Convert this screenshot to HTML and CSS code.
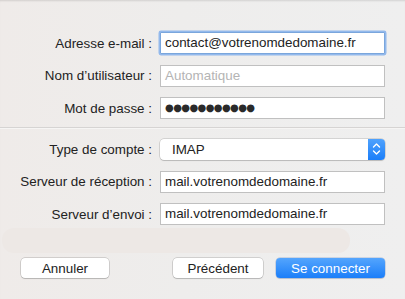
FILE: index.html
```html
<!DOCTYPE html>
<html lang="fr">

<head>
    <meta charset="UTF-8">
    <meta name="viewport" content="width=device-width, initial-scale=1.0">
    <title>Compte Mail</title>
    <link rel="stylesheet" href="styles.css">
</head>

<body>
    <div class="sheet">
        <div class="rows">
            <div class="row">
                <label class="label">Adresse e-mail :</label>
                <div class="field focused">contact@votrenomdedomaine.fr</div>
            </div>
            <div class="row">
                <label class="label">Nom d’utilisateur :</label>
                <div class="field placeholder">Automatique</div>
            </div>
            <div class="row">
                <label class="label">Mot de passe :</label>
                <div class="field dots">●●●●●●●●●●●</div>
            </div>
        </div>

        <div class="separator"></div>

        <div class="rows">
            <div class="row">
                <label class="label">Type de compte :</label>
                <div class="popup">
                    <span class="popupValue">IMAP</span>
                    <span class="stepper">
                        <svg width="9" height="14" viewBox="0 0 9 14">
                            <path d="M1.5 5 L4.5 2 L7.5 5 M1.5 9 L4.5 12 L7.5 9" fill="none" stroke="#fff" stroke-width="1.4" stroke-linecap="round" stroke-linejoin="round"/>
                        </svg>
                    </span>
                </div>
            </div>
            <div class="row">
                <label class="label">Serveur de réception :</label>
                <div class="field">mail.votrenomdedomaine.fr</div>
            </div>
            <div class="row">
                <label class="label">Serveur d’envoi :</label>
                <div class="field">mail.votrenomdedomaine.fr</div>
            </div>
        </div>

        <div class="haze"></div>

        <div class="buttons">
            <button class="btn cancel">Annuler</button>
            <div class="spacer"></div>
            <button class="btn">Précédent</button>
            <button class="btn primary">Se connecter</button>
        </div>
    </div>
</body>

</html>
```

FILE: styles.css
```css
html, body {
    height: 100%;
}

body {
    margin: 0;
    padding: 0;
    background: linear-gradient(90deg, #efebe9 0%, #eeedec 45%, #efefef 100%);
    color: #222;
    font-family: "Liberation Sans", Arial, sans-serif;
    font-size: 13.4px;
    overflow: hidden;
}

.sheet {
    height: 100%;
    box-sizing: border-box;
    padding-top: 32px;
    box-shadow: inset 0 2px 2px -1px rgba(0, 0, 0, 0.12);
}

.rows {
    display: flex;
    flex-direction: column;
    gap: 10.5px;
}

.row {
    display: flex;
    align-items: center;
    height: 22px;
}

.label {
    width: 156px;
    text-align: right;
    padding-right: 4px;
    box-sizing: border-box;
    white-space: nowrap;
}

.field {
    width: 225px;
    height: 22px;
    margin-left: 4px;
    box-sizing: border-box;
    border: 1px solid #c0c0c0;
    background-color: #fff;
    padding: 0 4px;
    line-height: 20px;
    white-space: nowrap;
}

.focused {
    border-color: #7aa6dc;
    box-shadow: 0 0 0 1.5px #93b9ec;
    border-radius: 1px;
}

.placeholder {
    color: #b4b4b4;
}

.dots {
    font-family: "DejaVu Sans", sans-serif;
    font-size: 10px;
    color: #2a2a2a;
    letter-spacing: -0.6px;
}

.separator {
    height: 1px;
    background-color: #d6d4d3;
    border-bottom: 1px solid #f6f5f4;
    margin: 8px 0 9px;
}

.popup {
    width: 225px;
    height: 21px;
    margin-left: 4px;
    box-sizing: border-box;
    display: flex;
    align-items: center;
    background-color: #fff;
    border-radius: 4px;
    box-shadow: 0 0 0 0.5px rgba(0, 0, 0, 0.22), 0 1px 1px rgba(0, 0, 0, 0.12);
    overflow: hidden;
}

.popupValue {
    flex: 1;
    padding-left: 12px;
}

.stepper {
    width: 17px;
    height: 100%;
    display: flex;
    align-items: center;
    justify-content: center;
    background: linear-gradient(#4fa2fd, #1b7ef9);
}

.haze {
    height: 25px;
    width: 348px;
    margin: 3px 0 0 2px;
    background-color: #ede8e5;
    border-radius: 12px;
}

.buttons {
    display: flex;
    align-items: center;
    gap: 12px;
    padding: 5px 20px 0 21px;
}

.spacer {
    flex: 1;
}

.btn {
    height: 20px;
    padding: 0;
    box-sizing: border-box;
    background-color: #fff;
    color: #222;
    border: none;
    border-radius: 4px;
    box-shadow: 0 0 0 0.5px rgba(0, 0, 0, 0.25), 0 1px 1px rgba(0, 0, 0, 0.12);
    font-family: "Liberation Sans", Arial, sans-serif;
    font-size: 13.4px;
    width: 90px;
}

.cancel {
    width: 88px;
}

.primary {
    width: 109px;
    margin-left: 1px;
    color: #fff;
    background: linear-gradient(#54a5fd, #1b7ef9);
    box-shadow: 0 0 0 0.5px rgba(0, 60, 160, 0.3), 0 1px 1px rgba(0, 0, 0, 0.1);
}
```
